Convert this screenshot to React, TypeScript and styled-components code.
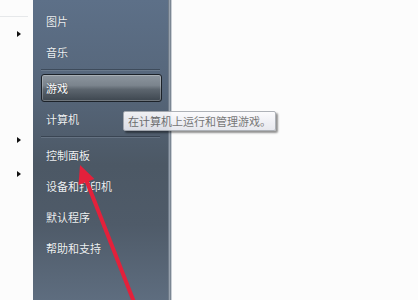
import React from "react";
import styled, { createGlobalStyle } from "styled-components";

const Global = createGlobalStyle`
  html, body { margin: 0; padding: 0; background: #fcfcfc; }
  body { font-family: "Noto Sans CJK SC", "Noto Sans", sans-serif; }
  #root { width: 418px; height: 300px; overflow: hidden; }
`;

const Screen = styled.div`
  position: relative;
  width: 418px;
  height: 300px;
  display: flex;
  background: #fcfcfc;
  overflow: hidden;
`;

const Gutter = styled.div`
  width: 33px;
  flex-shrink: 0;
  display: flex;
  flex-direction: column;
`;

const GutterLine = styled.div`
  height: 1px;
  margin-top: 16px;
  margin-right: 5px;
  background: #e6e8ea;
`;

const GutterRow = styled.div<{ $top: number }>`
  margin-top: ${(p) => p.$top}px;
  height: 6px;
  padding-left: 17px;
  display: flex;
  align-items: center;
`;

const Triangle = styled.div`
  width: 0;
  height: 0;
  border-top: 3px solid transparent;
  border-bottom: 3px solid transparent;
  border-left: 4px solid #111;
`;

const Panel = styled.div`
  width: 135px;
  flex-shrink: 0;
  display: flex;
  flex-direction: column;
  padding-top: 5px;
  background: linear-gradient(
    to bottom,
    #5d7088 0%,
    #56667a 30%,
    #4c5865 55%,
    #4f5b69 75%,
    #5e6d7f 100%
  );
  border-right: 1px solid #6e7a88;
  box-shadow: 1px 0 0 #97a1ad, 2px 0 0 #7b8693, 3px 0 0 #c9ced4;
`;

const Item = styled.div`
  height: 31px;
  display: flex;
  align-items: center;
  padding-left: 13px;
  color: #eef1f4;
  font-size: 11px;
  letter-spacing: 0;
  text-shadow: 0 0 1px rgba(0, 0, 0, 0.35);
`;

const ButtonWrap = styled.div`
  height: 31px;
  display: flex;
  align-items: center;
  padding-left: 8px;
  padding-right: 6px;
`;

const Highlight = styled.div`
  flex: 1;
  height: 28px;
  box-sizing: border-box;
  display: flex;
  align-items: center;
  padding-left: 4px;
  border: 1px solid #1c2229;
  border-radius: 3px;
  color: #ffffff;
  font-size: 11px;
  background: linear-gradient(
    to bottom,
    #8c959e 0%,
    #7b848d 40%,
    #5d666f 55%,
    #3d464f 100%
  );
  box-shadow: inset 0 0 0 1px rgba(255, 255, 255, 0.25);
  text-shadow: 0 0 2px rgba(0, 0, 0, 0.5);
`;

const Separator = styled.div`
  height: 5px;
  display: flex;
  align-items: center;
  padding: 0 8px 0 8px;
  &::after {
    content: "";
    flex: 1;
    height: 1px;
    background: rgba(32, 40, 50, 0.45);
    box-shadow: 0 1px 0 rgba(140, 155, 170, 0.35);
  }
`;

const Tooltip = styled.div`
  position: absolute;
  left: 123px;
  top: 111px;
  width: 153px;
  height: 20px;
  box-sizing: border-box;
  padding-left: 4px;
  display: flex;
  align-items: center;
  border: 1px solid #a9adb3;
  border-radius: 2px;
  background: linear-gradient(to bottom, #fbfbfd 0%, #e6e7ee 100%);
  box-shadow: 2px 2px 2px rgba(0, 0, 0, 0.45);
  color: #6e6e6e;
  font-size: 11px;
  white-space: nowrap;
  opacity: 0.93;
`;

const Overlay = styled.svg`
  position: absolute;
  left: 0;
  top: 0;
  pointer-events: none;
`;

const items1 = ["图片", "音乐"];
const items3 = ["控制面板", "设备和打印机", "默认程序", "帮助和支持"];

export default function App() {
  return (
    <>
      <Global />
      <Screen>
        <Gutter>
          <GutterLine />
          <GutterRow $top={14}>
            <Triangle />
          </GutterRow>
          <GutterRow $top={100}>
            <Triangle />
          </GutterRow>
          <GutterRow $top={28}>
            <Triangle />
          </GutterRow>
        </Gutter>
        <Panel>
          {items1.map((t) => (
            <Item key={t}>{t}</Item>
          ))}
          <Separator />
          <ButtonWrap>
            <Highlight>游戏</Highlight>
          </ButtonWrap>
          <Item>计算机</Item>
          <Separator />
          {items3.map((t) => (
            <Item key={t}>{t}</Item>
          ))}
        </Panel>
        <Tooltip>在计算机上运行和管理游戏。</Tooltip>
        <Overlay width="418" height="300" viewBox="0 0 418 300">
          <line x1="134" y1="302" x2="85" y2="177" stroke="#e3213b" strokeWidth="4" />
          <polygon points="80,165 94.5,179 78.5,185" fill="#e3213b" />
        </Overlay>
      </Screen>
    </>
  );
}
